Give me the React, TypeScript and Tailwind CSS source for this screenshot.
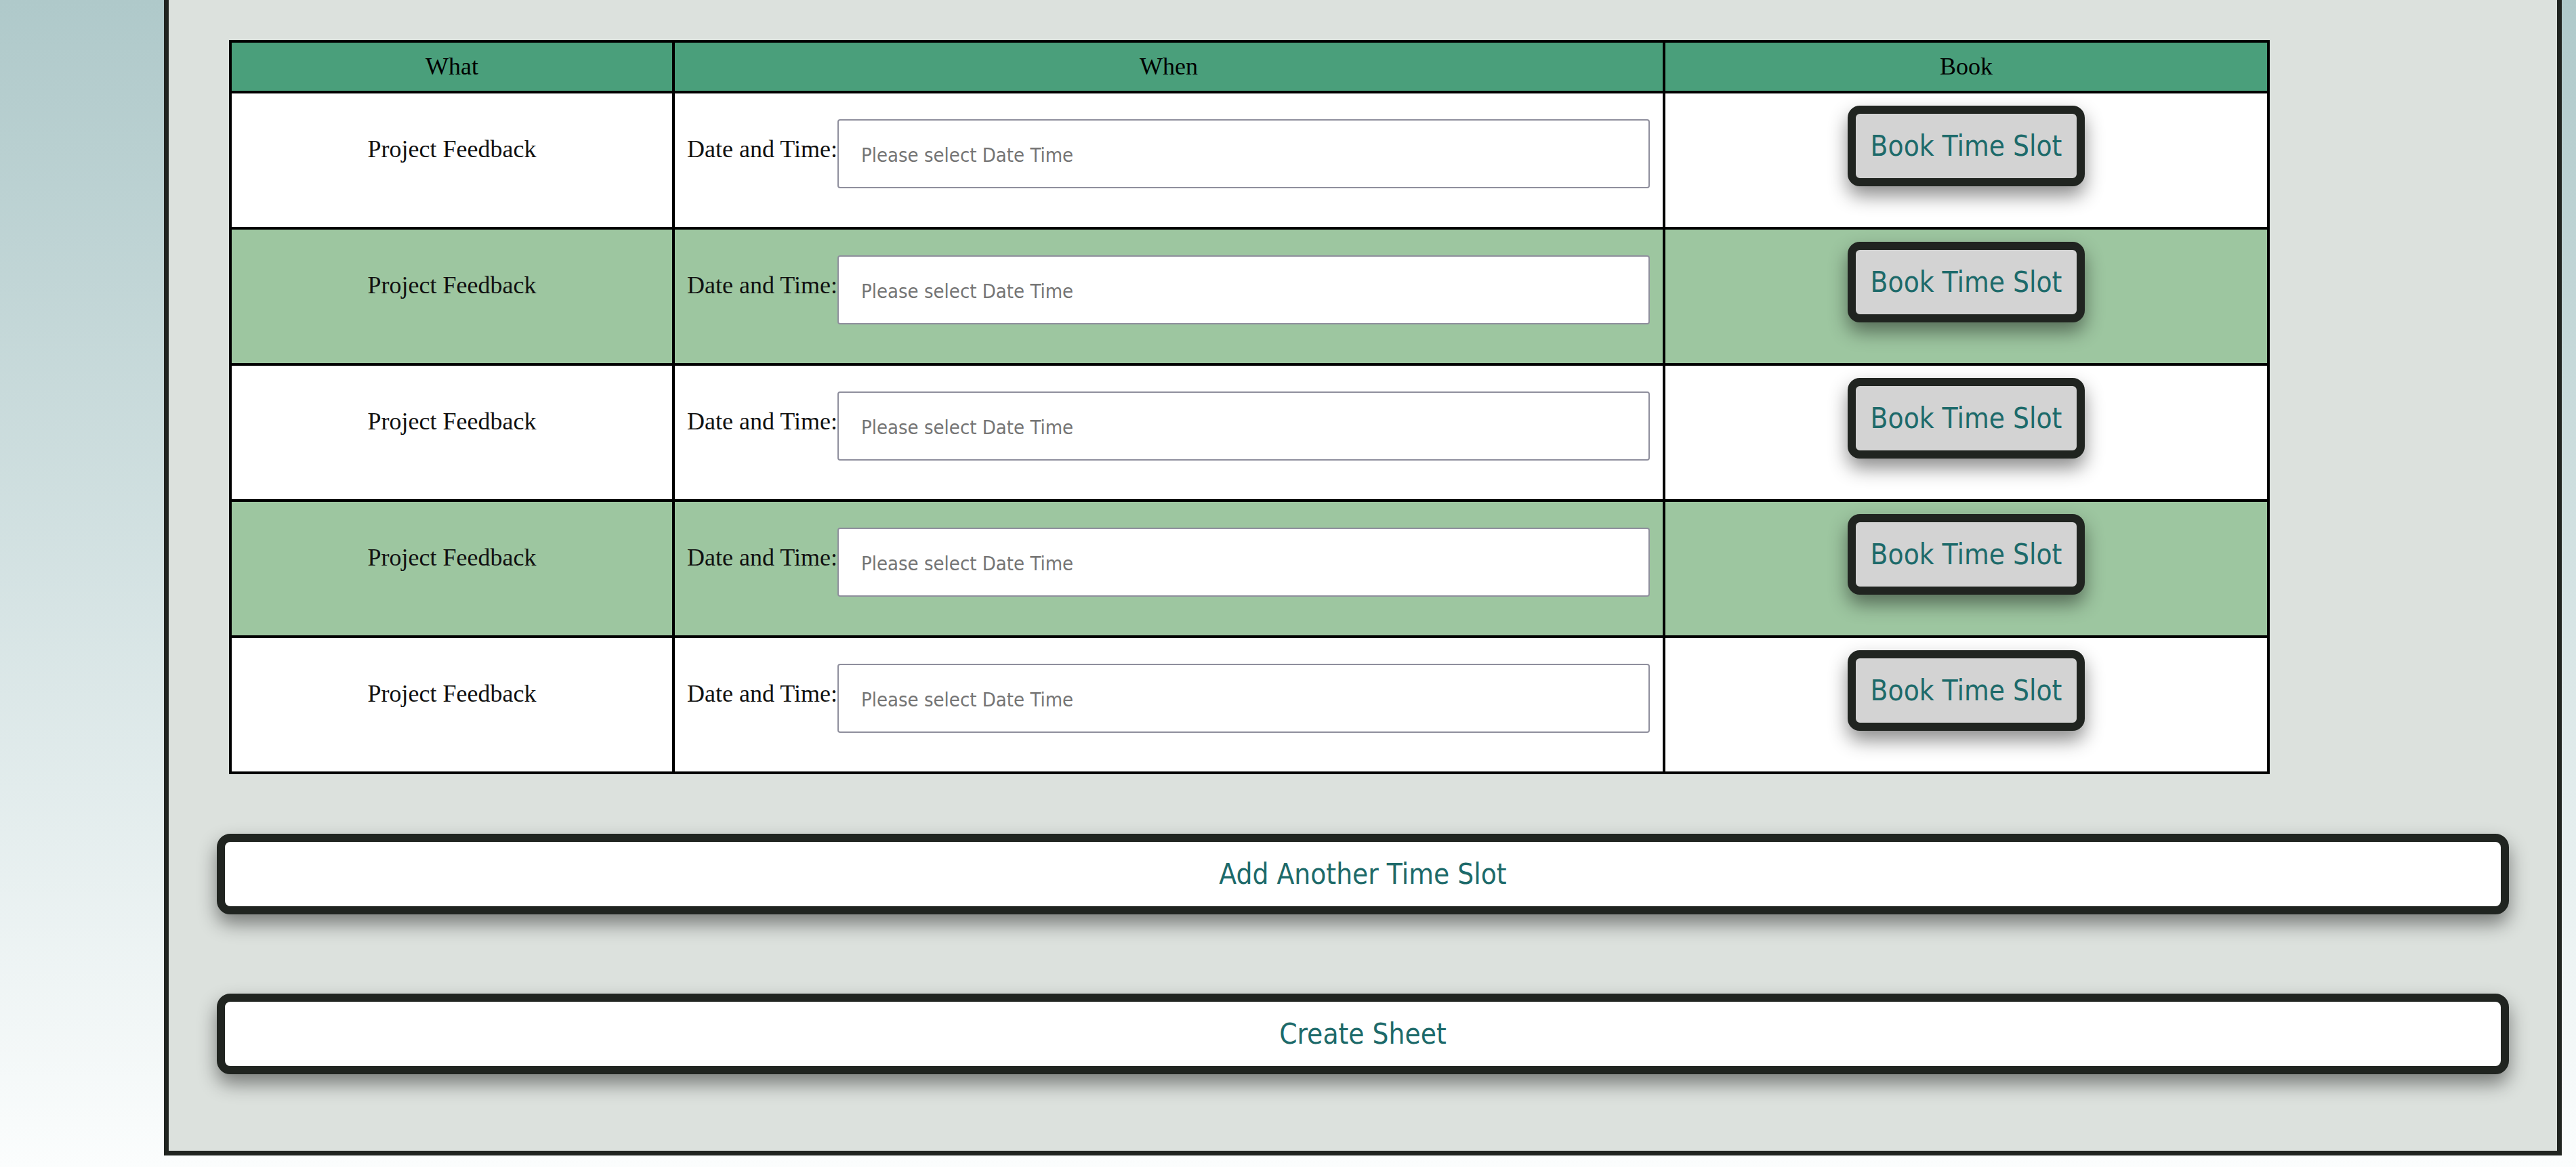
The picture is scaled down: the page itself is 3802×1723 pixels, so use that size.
const serif = "font-['Liberation_Serif','Times_New_Roman',serif]";
const sans = "font-['DejaVu_Sans_Condensed','DejaVu_Sans',sans-serif] [font-stretch:condensed]";

const slots = [0, 1, 2, 3, 4];

function BookButton() {
  return (
    <button
      className={`${sans} h-[119px] w-[350px] rounded-[18px] border-[12px] border-[#202420] bg-[#d3d3d3] text-[42px] leading-none text-[#1d6a6a] shadow-[0_14px_28px_rgba(0,0,0,0.45)]`}
    >
      Book Time Slot
    </button>
  );
}

function WideButton({ label }: { label: string }) {
  return (
    <button
      className={`${sans} h-[119px] w-full rounded-[20px] border-[12px] border-[#202420] bg-white text-[42px] leading-none text-[#1d6a6a] shadow-[0_14px_28px_rgba(0,0,0,0.45)]`}
    >
      {label}
    </button>
  );
}

function SlotRow({ shaded }: { shaded: boolean }) {
  return (
    <div
      className={`flex h-[201px] border-t-4 border-black ${shaded ? "bg-[#9dc6a0]" : "bg-white"}`}
    >
      {/* What */}
      <div className="w-[650px] pt-[62px] text-center text-[36px] leading-[41px] text-[#111]">
        Project Feedback
      </div>

      {/* When */}
      <div className="flex w-[1462px] items-start border-l-4 border-black pl-[18px] pr-[19px] pt-[38px]">
        <span className="mt-[24px] whitespace-nowrap text-[36px] leading-[41px] text-[#111]">
          Date and Time:
        </span>
        <input
          type="text"
          placeholder="Please select Date Time"
          className={`${sans} h-[102px] flex-1 rounded-[4px] border-2 border-[#8f8f9d] bg-white pl-[33px] pt-[4px] text-[29px] text-black outline-none placeholder:text-[#757575]`}
        />
      </div>

      {/* Book */}
      <div className="flex w-[892px] justify-center border-l-4 border-black pt-[18px]">
        <BookButton />
      </div>
    </div>
  );
}

export default function App() {
  return (
    <div className={`${serif} h-[1723px] w-[3802px] overflow-hidden bg-linear-to-b from-[#afc9ca] to-[#fbfdfd]`}>
      <div className="ml-[242px] w-[3539px] border-x-[7px] border-b-[7px] border-[#202420] bg-[#dce1dd] px-[71px] pt-[59px] pb-[113px]">
        {/* Table */}
        <div className="ml-[18px] w-[3012px] border-4 border-black">
          <div className="flex h-[71px] bg-[#4a9f7b] text-[36px] leading-[41px] text-black">
            <div className="flex w-[650px] items-center justify-center">What</div>
            <div className="flex w-[1462px] items-center justify-center border-l-4 border-black">When</div>
            <div className="flex w-[892px] items-center justify-center border-l-4 border-black">Book</div>
          </div>
          {slots.map((i) => (
            <SlotRow key={i} shaded={i % 2 === 1} />
          ))}
        </div>

        <div className="mt-[88px]">
          <WideButton label="Add Another Time Slot" />
        </div>
        <div className="mt-[117px]">
          <WideButton label="Create Sheet" />
        </div>
      </div>
    </div>
  );
}
